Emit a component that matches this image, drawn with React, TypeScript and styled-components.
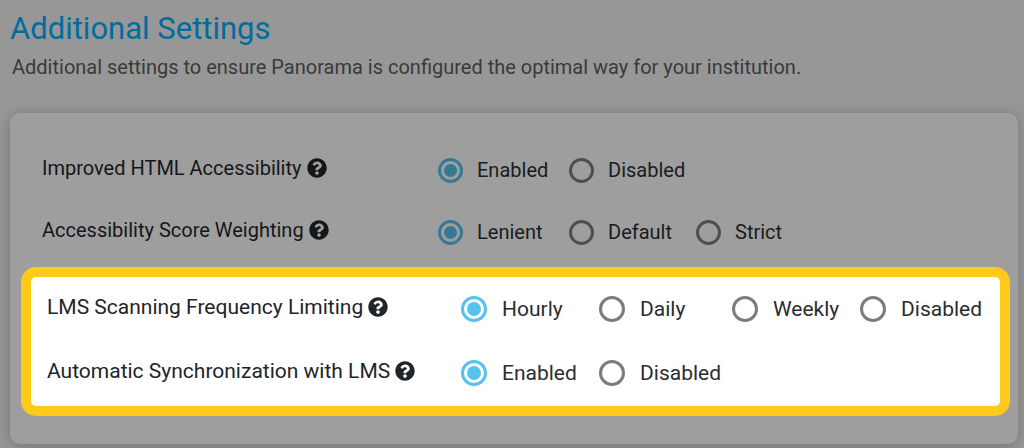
import React from "react";
import styled, { createGlobalStyle, css } from "styled-components";
import { FaQuestionCircle } from "react-icons/fa";

const GlobalStyle = createGlobalStyle`
  *, *::before, *::after { box-sizing: border-box; }
  body {
    margin: 0;
    background: #979797;
    font-family: Roboto, "Liberation Sans", sans-serif;
  }
`;

const Page = styled.main`
  padding: 8px 6px 4px 10px;
`;

const Title = styled.h1`
  margin: 0;
  color: #006c9f;
  font-size: 31px;
  font-weight: 400;
  line-height: 42px;
`;

const Intro = styled.p`
  margin: 4px 0 33px 2px;
  color: #3a3a3a;
  font-size: 20px;
  line-height: 26px;
`;

const Card = styled.section`
  padding: 26px 8px 28px 11px;
  border-radius: 10px;
  background: #9e9e9e;
  box-shadow: 0 2px 14px rgba(0, 0, 0, 0.24);
`;

const DimmedRows = styled.div`
  padding: 0 21px 4px;
`;

const Spotlight = styled.div`
  padding: 0 16px 1px;
  border: 10px solid #ffca18;
  border-radius: 15px;
  background: #ffffff;
`;

const Row = styled.div<{ $lit: boolean }>`
  display: grid;
  align-items: center;
  ${({ $lit }) =>
    $lit
      ? css`
          grid-template-columns: 414px 1fr;
          min-height: 64px;
          color: #212529;
          font-size: 21px;
        `
      : css`
          grid-template-columns: 396px 1fr;
          min-height: 62px;
          color: #14171a;
          font-size: 20px;
        `}
`;

const RowLabel = styled.div`
  display: flex;
  align-items: center;
  gap: 5px;
  padding-bottom: 5px;
  line-height: 26px;
  white-space: nowrap;
`;

const HelpButton = styled.button`
  display: flex;
  padding: 0;
  border: 0;
  background: none;
  color: inherit;
  font-size: 20px;
  cursor: pointer;
`;

const Options = styled.div<{ $lit: boolean }>`
  display: grid;
  grid-template-columns: ${({ $lit }) =>
    $lit ? "138px 133px 128px auto" : "131px 127px auto"};
  justify-content: start;
`;

const Option = styled.label<{ $lit: boolean }>`
  display: flex;
  align-items: center;
  gap: ${({ $lit }) => ($lit ? "15px" : "14px")};
  color: ${({ $lit }) => ($lit ? "#2b2d2f" : "#1a1b1d")};
  line-height: 26px;
  white-space: nowrap;
  cursor: pointer;
`;

const Radio = styled.input<{ $lit: boolean }>`
  appearance: none;
  display: grid;
  place-items: center;
  flex: none;
  width: ${({ $lit }) => ($lit ? "26px" : "25px")};
  height: ${({ $lit }) => ($lit ? "26px" : "25px")};
  margin: 0;
  border: 3px solid ${({ $lit }) => ($lit ? "#7c7c7c" : "#4e4e4e")};
  border-radius: 50%;
  cursor: pointer;

  &:checked {
    border-color: ${({ $lit }) => ($lit ? "#55c3f1" : "#357995")};
  }

  &:checked::before {
    content: "";
    width: ${({ $lit }) => ($lit ? "14px" : "13px")};
    height: ${({ $lit }) => ($lit ? "14px" : "13px")};
    border-radius: 50%;
    background: ${({ $lit }) => ($lit ? "#55c3f1" : "#357995")};
  }
`;

type Setting = { id: string; label: string; options: string[] };

const generalSettings: Setting[] = [
  { id: "html", label: "Improved HTML Accessibility", options: ["Enabled", "Disabled"] },
  { id: "score", label: "Accessibility Score Weighting", options: ["Lenient", "Default", "Strict"] },
];

const lmsSettings: Setting[] = [
  { id: "scan", label: "LMS Scanning Frequency Limiting", options: ["Hourly", "Daily", "Weekly", "Disabled"] },
  { id: "sync", label: "Automatic Synchronization with LMS", options: ["Enabled", "Disabled"] },
];

function SettingRow({ setting, lit = false }: { setting: Setting; lit?: boolean }) {
  const labelId = `${setting.id}-label`;
  return (
    <Row $lit={lit} role="radiogroup" aria-labelledby={labelId}>
      <RowLabel>
        <span id={labelId}>{setting.label}</span>
        <HelpButton type="button" aria-label={`Help: ${setting.label}`}>
          <FaQuestionCircle aria-hidden="true" />
        </HelpButton>
      </RowLabel>
      <Options $lit={lit}>
        {setting.options.map((name, i) => (
          <Option key={name} $lit={lit}>
            <Radio $lit={lit} type="radio" name={setting.id} value={name} defaultChecked={i === 0} />
            {name}
          </Option>
        ))}
      </Options>
    </Row>
  );
}

export default function App() {
  return (
    <>
      <GlobalStyle />
      <Page>
        <Title>Additional Settings</Title>
        <Intro>
          Additional settings to ensure Panorama is configured the optimal way for your institution.
        </Intro>
        <Card>
          <DimmedRows>
            {generalSettings.map((s) => (
              <SettingRow key={s.id} setting={s} />
            ))}
          </DimmedRows>
          <Spotlight>
            {lmsSettings.map((s) => (
              <SettingRow key={s.id} setting={s} lit />
            ))}
          </Spotlight>
        </Card>
      </Page>
    </>
  );
}
